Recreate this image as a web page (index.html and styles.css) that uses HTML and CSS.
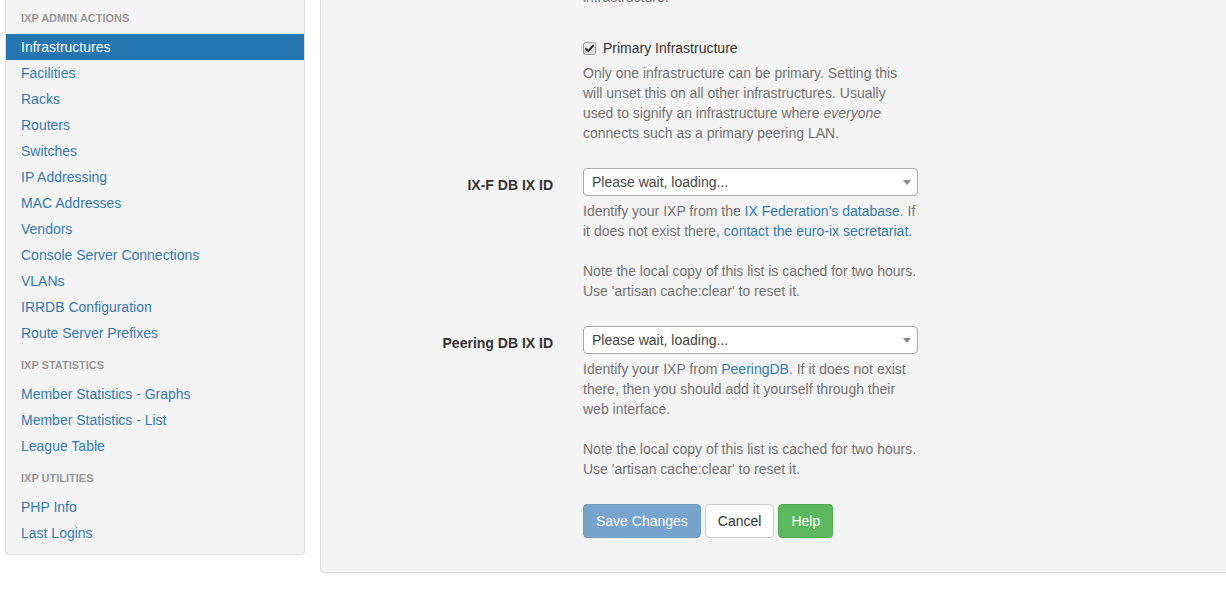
FILE: index.html
```html
<!DOCTYPE html>
<html lang="en">
<head>
  <meta charset="UTF-8">
  <meta name="viewport" content="width=device-width, initial-scale=1.0">
  <title>IXP Manager | Infrastructures</title>
  <link rel="stylesheet" href="styles.css">
</head>
<body>

  <div class="page">

    <!-- sidebar start -->
    <div class="sidebar">
      <div class="nav_header">IXP Admin Actions</div>
      <a class="nav_link active" href="#">Infrastructures</a>
      <a class="nav_link" href="#">Facilities</a>
      <a class="nav_link" href="#">Racks</a>
      <a class="nav_link" href="#">Routers</a>
      <a class="nav_link" href="#">Switches</a>
      <a class="nav_link" href="#">IP Addressing</a>
      <a class="nav_link" href="#">MAC Addresses</a>
      <a class="nav_link" href="#">Vendors</a>
      <a class="nav_link" href="#">Console Server Connections</a>
      <a class="nav_link" href="#">VLANs</a>
      <a class="nav_link" href="#">IRRDB Configuration</a>
      <a class="nav_link" href="#">Route Server Prefixes</a>

      <div class="nav_header">IXP Statistics</div>
      <a class="nav_link" href="#">Member Statistics - Graphs</a>
      <a class="nav_link" href="#">Member Statistics - List</a>
      <a class="nav_link" href="#">League Table</a>

      <div class="nav_header">IXP Utilities</div>
      <a class="nav_link" href="#">PHP Info</a>
      <a class="nav_link" href="#">Last Logins</a>
    </div>
    <!-- sidebar end -->

    <!-- form start -->
    <div class="main">
      <form class="form_horizontal">

        <div class="form_group">
          <div class="control_label"></div>
          <div class="controls">
            <p class="help_block first">The name of this infrastructure, e.g. the name of the
              infrastructure.</p>
          </div>
        </div>

        <div class="form_group">
          <div class="control_label"></div>
          <div class="controls">
            <label class="checkbox">
              <svg class="check_icon" width="13" height="13" viewBox="0 0 13 13">
                <defs>
                  <linearGradient id="cb_bg" x1="0" y1="0" x2="0" y2="1">
                    <stop offset="0" stop-color="#f2f2f2"/>
                    <stop offset="1" stop-color="#d8d8d8"/>
                  </linearGradient>
                </defs>
                <rect x="0.5" y="0.5" width="12" height="12" rx="2" fill="url(#cb_bg)" stroke="#9a9a9a"/>
                <path d="M3 6.8 L5.3 9.2 L10 3.6" fill="none" stroke="#2b2b2b" stroke-width="1.9" stroke-linecap="round" stroke-linejoin="round"/>
              </svg>
              Primary Infrastructure
            </label>
            <p class="help_block">Only one infrastructure can be primary. Setting this will unset this on all other infrastructures. Usually used to signify an infrastructure where <em>everyone</em> connects such as a primary peering LAN.</p>
          </div>
        </div>

        <div class="form_group">
          <label class="control_label">IX-F DB IX ID</label>
          <div class="controls">
            <span class="select_box">
              <span class="select_text">Please wait, loading...</span>
              <span class="select_arrow"></span>
            </span>
            <p class="help_block">Identify your IXP from the <a href="#">IX Federation's database</a>. If it does not exist there, <a href="#">contact the euro-ix secretariat</a>.
              <br><br>
              Note the local copy of this list is cached for two hours. Use 'artisan cache:clear' to reset it.</p>
          </div>
        </div>

        <div class="form_group">
          <label class="control_label">Peering DB IX ID</label>
          <div class="controls">
            <span class="select_box">
              <span class="select_text">Please wait, loading...</span>
              <span class="select_arrow"></span>
            </span>
            <p class="help_block">Identify your IXP from <a href="#">PeeringDB</a>. If it does not exist there, then you should add it yourself through their web interface.
              <br><br>
              Note the local copy of this list is cached for two hours. Use 'artisan cache:clear' to reset it.</p>
          </div>
        </div>

        <div class="form_group">
          <div class="control_label"></div>
          <div class="controls buttons">
            <button class="btn btn_primary" type="submit" disabled>Save Changes</button>
            <a class="btn btn_default" href="#">Cancel</a>
            <a class="btn btn_success" href="#">Help</a>
          </div>
        </div>

      </form>
    </div>
    <!-- form end -->

  </div>

</body>
</html>
```

FILE: styles.css
```css
html {
  box-sizing: border-box;
  overflow: hidden;
}
*, *:before, *:after {
  box-sizing: inherit;
}
body {
  margin: 0;
  font-family: "Liberation Sans", Arial, Helvetica, sans-serif;
  font-size: 14px;
  line-height: 20px;
  color: #333;
  background-color: #fff;
}
a {
  color: #337ab7;
  text-decoration: none;
}

/* page is shown scrolled down a little */
.page {
  display: flex;
  align-items: flex-start;
  margin-top: -57px;
  padding-left: 5px;
}

/* sidebar */
.sidebar {
  width: 300px;
  flex-shrink: 0;
  margin-top: 46px;
  padding: 9px 0 8px;
  background-color: #f4f4f4;
  border: 1px solid #dcdcdc;
  border-radius: 4px;
}
.nav_header {
  padding: 12px 15px 8px;
  font-size: 11px;
  line-height: 15px;
  font-weight: 700;
  text-transform: uppercase;
  color: #999;
}
.nav_link {
  display: block;
  padding: 3px 15px;
  line-height: 20px;
}
.nav_link.active {
  background-color: #2576b0;
  color: #fff;
}

/* main panel */
.main {
  flex: 1;
  margin-left: 15px;
  margin-right: -6px;
  padding: 23px 0 19px;
  background-color: #f4f4f4;
  border: 1px solid #dcdcdc;
  border-radius: 4px;
}
.form_group {
  display: grid;
  grid-template-columns: 232px 335px;
  column-gap: 30px;
  margin-bottom: 15px;
}
.control_label {
  padding-top: 7px;
  text-align: right;
  font-weight: 700;
}
.help_block {
  margin: 5px 0 10px;
  color: #737373;
}
.help_block.first {
  margin: 0 0 6px;
}
.checkbox {
  display: flex;
  align-items: center;
  padding-top: 10px;
  cursor: pointer;
}
.check_icon {
  margin-right: 7px;
}

/* select2 look-alike */
.select_box {
  display: flex;
  align-items: center;
  justify-content: space-between;
  height: 28px;
  padding: 0 6px 0 8px;
  background-color: #fff;
  border: 1px solid #aaa;
  border-radius: 4px;
  color: #444;
}
.select_arrow {
  width: 0;
  height: 0;
  border-style: solid;
  border-width: 5px 4px 0 4px;
  border-color: #888 transparent transparent transparent;
}

/* buttons */
.buttons {
  display: flex;
  gap: 4px;
}
.btn {
  display: inline-block;
  padding: 6px 12px;
  font-family: inherit;
  font-size: 14px;
  line-height: 20px;
  border: 1px solid transparent;
  border-radius: 4px;
  cursor: pointer;
}
.btn_primary {
  color: #fff;
  background-color: #337ab7;
  border-color: #2e6da4;
}
.btn_primary:disabled {
  opacity: .65;
  cursor: not-allowed;
}
.btn_default {
  color: #333;
  background-color: #fff;
  border-color: #ccc;
}
.btn_success {
  color: #fff;
  background-color: #5cb85c;
  border-color: #4cae4c;
}
```
